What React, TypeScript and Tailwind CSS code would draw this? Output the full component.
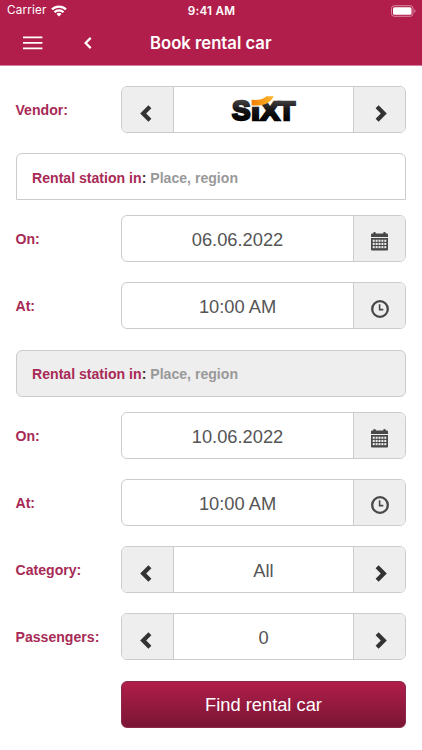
import React from 'react';
import clsx from 'clsx';

type IconProps = { className?: string };

function ChevronLeft({ className }: IconProps) {
  return (
    <svg viewBox="0 0 12 17" className={className} fill="currentColor">
      <path d="M8.4 0.2 L11.4 3.2 L6.2 8.5 L11.4 13.8 L8.4 16.8 L0.2 8.5 Z" />
    </svg>
  );
}

function ChevronRight({ className }: IconProps) {
  return (
    <svg viewBox="0 0 12 17" className={className} fill="currentColor">
      <path d="M3.6 0.2 L0.6 3.2 L5.8 8.5 L0.6 13.8 L3.6 16.8 L11.8 8.5 Z" />
    </svg>
  );
}

function CalendarIcon() {
  const cols = [1.7, 4.6, 7.5, 10.4, 13.3];
  const rows = [7.7, 10.9, 14.1];
  return (
    <svg viewBox="0 0 17 19" className="mt-1.5 h-[19px] w-[17px]">
      <path
        d="M0 5V2.6Q0 1.5 1.1 1.5H2.2V1.2Q2.2 0 3.5 0T4.8 1.2V1.5H12.2V1.2Q12.2 0 13.5 0T14.8 1.2V1.5H15.9Q17 1.5 17 2.6V5Z"
        fill="#484848"
      />
      <path d="M0 6H17V17.5Q17 18.4 16 18.4H1Q0 18.4 0 17.5Z" fill="#484848" />
      {rows.map((y) =>
        cols.map((x) => (
          <rect key={`${x}-${y}`} x={x} y={y} width="2" height="2.1" fill="#eee" />
        ))
      )}
    </svg>
  );
}

function ClockIcon() {
  return (
    <svg
      viewBox="0 0 18 18"
      className="mt-1.5 ml-px size-[18px]"
      fill="none"
      stroke="#484848"
    >
      <circle cx="9" cy="9" r="7.8" strokeWidth="2.3" />
      <path d="M8.6 4.3V9.6H12.3" strokeWidth="1.6" />
    </svg>
  );
}

function SixtLogo() {
  return (
    <svg viewBox="0 0 66 42" className="h-[42px] w-[66px]">
      <defs>
        <linearGradient id="ink" gradientUnits="userSpaceOnUse" x1="0" y1="11" x2="0" y2="33">
          <stop offset="0" stopColor="#4a4648" />
          <stop offset="0.5" stopColor="#171516" />
          <stop offset="1" stopColor="#000" />
        </linearGradient>
        <linearGradient id="swoosh" x1="0" y1="0" x2="1" y2="0">
          <stop offset="0" stopColor="#f07d00" />
          <stop offset="1" stopColor="#ffb92e" />
        </linearGradient>
      </defs>
      <g
        fill="url(#ink)"
        stroke="url(#ink)"
        strokeWidth="2.4"
        fontFamily="'Liberation Sans', Arial, sans-serif"
        fontWeight="700"
      >
        <text x="1" y="31.6" fontSize="28.5" textLength="18.5" lengthAdjust="spacingAndGlyphs">
          S
        </text>
        <text x="20.6" y="31.6" fontSize="22" textLength="8" lengthAdjust="spacingAndGlyphs">
          ı
        </text>
        <text x="29.6" y="31.6" fontSize="25" textLength="19" lengthAdjust="spacingAndGlyphs">
          X
        </text>
        <text x="47.2" y="31.6" fontSize="26" textLength="16.8" lengthAdjust="spacingAndGlyphs">
          T
        </text>
      </g>
      <path
        d="M20.6 11.8C27 12.3 31.6 11.6 35.6 8.2H42.8C39.6 14.8 32.6 18.6 20.6 17.4Z"
        fill="url(#swoosh)"
      />
    </svg>
  );
}

function Row({ label, children }: { label: string; children: React.ReactNode }) {
  return (
    <div className="flex h-[47px] items-center">
      <div className="w-[105.5px] shrink-0 pt-0.5 text-[14.1px] font-bold text-[#a82a56]">
        {label}
      </div>
      <div className="flex h-full flex-1 overflow-hidden rounded-[6px] border border-[#ccc] bg-white">
        {children}
      </div>
    </div>
  );
}

function Addon({ side, children }: { side: 'left' | 'right'; children: React.ReactNode }) {
  return (
    <button
      className={clsx(
        'flex w-[52px] shrink-0 items-center justify-center border-[#ccc] bg-[#eee] text-[#333]',
        side === 'left' ? 'border-r' : 'border-l'
      )}
    >
      {children}
    </button>
  );
}

function Value({ children }: { children: React.ReactNode }) {
  return (
    <div className="flex flex-1 items-center justify-center pt-[2.6px] text-[18.3px] text-[#555]">
      {children}
    </div>
  );
}

function Stepper({ label, children }: { label: string; children: React.ReactNode }) {
  return (
    <Row label={label}>
      <Addon side="left">
        <ChevronLeft className="mt-2 mr-[3px] h-[17px] w-3" />
      </Addon>
      {children}
      <Addon side="right">
        <ChevronRight className="mt-2 ml-[3px] h-[17px] w-3" />
      </Addon>
    </Row>
  );
}

function Picker({ label, value, icon }: { label: string; value: string; icon: React.ReactNode }) {
  return (
    <Row label={label}>
      <Value>{value}</Value>
      <Addon side="right">{icon}</Addon>
    </Row>
  );
}

function Station({ className }: { className: string }) {
  return (
    <div
      className={clsx(
        'flex h-[47px] items-center border border-[#ccc] px-[15.5px] pt-[3.5px] text-[14.1px] font-bold whitespace-pre text-[#333]',
        className
      )}
    >
      <span className="text-[#a82a56]">Rental station in</span>:{' '}
      <span className="text-[#999]">Place, region</span>
    </div>
  );
}

function Header() {
  return (
    <header className="h-[66px] border-b border-[#d57d9a] bg-[#b11e4b] font-['Inter',sans-serif] text-white">
      <div className="grid h-[22px] grid-cols-3 items-center pr-1.5 pl-[7px] text-[11.7px]">
        <div className="flex items-center gap-1 tracking-[0.2px]">
          Carrier
          <svg viewBox="0 0 16 12" className="h-3 w-4" fill="none" stroke="#fff" strokeWidth="2.3">
            <path d="M1 4.4A10 10 0 0 1 15 4.4" />
            <path d="M3.5 7.2A6.4 6.4 0 0 1 12.5 7.2" />
            <path d="M8 11.6L5.5 9A3.6 3.6 0 0 1 10.5 9Z" fill="#fff" stroke="none" />
          </svg>
        </div>
        <div className="pt-px text-center font-semibold tracking-[0.25px]">9:41 AM</div>
        <svg viewBox="0 0 25 12" className="h-3 w-[25px] justify-self-end">
          <rect x="0.5" y="0.7" width="21.5" height="10.6" rx="2.8" fill="none" stroke="#d88aa3" />
          <rect x="2" y="2.2" width="18.5" height="7.6" rx="1.5" fill="#fff" />
          <path d="M23.3 4.2Q24.6 4.8 24.6 6T23.3 7.8Z" fill="#d88aa3" />
        </svg>
      </div>
      <div className="flex h-[42px] items-center pl-[23px]">
        <svg viewBox="0 0 20 14" className="h-3.5 w-5" stroke="#fff" strokeWidth="1.9">
          <path d="M0 1.4H19.4M0 6.9H19.4M0 12.4H19.4" />
        </svg>
        <svg
          viewBox="0 0 8 12"
          className="ml-[41px] h-3 w-2"
          fill="none"
          stroke="#fff"
          strokeWidth="2.2"
        >
          <path d="M6.7 0.9L1.6 6L6.7 11.1" />
        </svg>
        <h1 className="ml-[58px] pt-0.5 text-[16.7px] font-semibold">Book rental car</h1>
      </div>
    </header>
  );
}

export default function App() {
  return (
    <div className="min-h-screen bg-white font-['Liberation_Sans',Arial,sans-serif]">
      <Header />
      <main className="flex flex-col gap-[20.2px] pt-[19.7px] pr-4 pl-[15.5px]">
        <Stepper label="Vendor:">
          <div className="flex flex-1 items-center justify-center">
            <SixtLogo />
          </div>
        </Stepper>
        <div className="flex flex-col gap-[15.25px]">
          <Station className="rounded-t-[6px] bg-white" />
          <Picker label="On:" value="06.06.2022" icon={<CalendarIcon />} />
        </div>
        <Picker label="At:" value="10:00 AM" icon={<ClockIcon />} />
        <div className="flex flex-col gap-[15.25px]">
          <Station className="rounded-[6px] bg-[#eee]" />
          <Picker label="On:" value="10.06.2022" icon={<CalendarIcon />} />
        </div>
        <Picker label="At:" value="10:00 AM" icon={<ClockIcon />} />
        <Stepper label="Category:">
          <Value>All</Value>
        </Stepper>
        <Stepper label="Passengers:">
          <Value>0</Value>
        </Stepper>
        <button className="ml-[105.5px] h-[47px] rounded-[6px] border border-[#8a2a4a] bg-linear-to-b from-[#b11e4b] to-[#7a1534] pt-0.5 text-[18.3px] text-white">
          Find rental car
        </button>
      </main>
    </div>
  );
}
